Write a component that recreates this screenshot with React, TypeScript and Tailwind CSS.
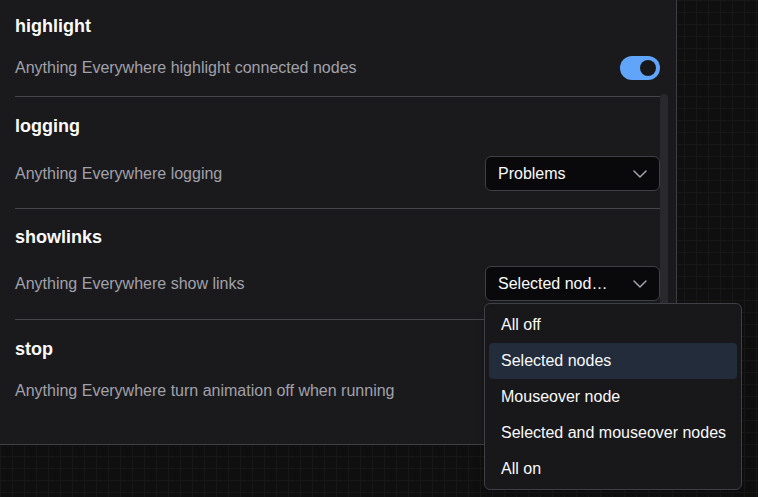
import { useState } from 'react'

type Setting = {
  name: string
  desc: string
  control: 'toggle' | 'select'
  value?: string
  pad: string
}

const SETTINGS: Setting[] = [
  {
    name: 'highlight',
    desc: 'Anything Everywhere highlight connected nodes',
    control: 'toggle',
    pad: 'gap-[14px] pt-3 pb-[14px] border-b',
  },
  {
    name: 'logging',
    desc: 'Anything Everywhere logging',
    control: 'select',
    value: 'Problems',
    pad: 'gap-4 pt-[15px] pb-[17px] border-b',
  },
  {
    name: 'showlinks',
    desc: 'Anything Everywhere show links',
    control: 'select',
    value: 'Selected nodes',
    pad: 'gap-[15px] pt-[14px] pb-[18px] border-b',
  },
  {
    name: 'stop',
    desc: 'Anything Everywhere turn animation off when running',
    control: 'toggle',
    pad: 'gap-[14px] pt-[15px] pb-4',
  },
]

const OPTIONS = ['All off', 'Selected nodes', 'Mouseover node', 'Selected and mouseover nodes', 'All on']

function Chevron() {
  return (
    <svg width="14" height="8" viewBox="0 0 14 8" fill="none" className="shrink-0" aria-hidden>
      <path d="M1 1l6 6 6-6" stroke="#a1a1aa" strokeWidth="1.5" strokeLinecap="round" strokeLinejoin="round" />
    </svg>
  )
}

function Toggle({ on }: { on: boolean }) {
  return (
    <div className={`flex h-6 w-10 items-center rounded-full px-1 ${on ? 'justify-end bg-[#60a5fa]' : 'justify-start bg-[#3f3f46]'}`}>
      <div className="size-4 rounded-full bg-[#18181b]" />
    </div>
  )
}

function SelectTrigger({ value }: { value: string }) {
  return (
    <div className="flex h-[35px] w-[175px] items-center justify-between rounded-md border border-[#3f3f46] bg-[#09090b] px-3">
      <span className="max-w-[110px] truncate whitespace-nowrap text-base text-[#fafafa]">{value}</span>
      <Chevron />
    </div>
  )
}

function SettingRow({ s }: { s: Setting }) {
  return (
    <div className={`flex flex-col border-[#45454b] ${s.pad}`}>
      <h3 className="text-lg font-bold leading-7 text-[#fafafa]">{s.name}</h3>
      <div className={`flex items-center justify-between ${s.control === 'toggle' ? 'h-7' : 'h-[35px]'}`}>
        <span className="text-base text-[#a1a1aa]">{s.desc}</span>
        {s.control === 'toggle' ? <Toggle on /> : <SelectTrigger value={s.value ?? ''} />}
      </div>
    </div>
  )
}

export default function App() {
  const [active] = useState(1)

  return (
    <div
      className="relative h-[497px] w-[758px] overflow-hidden bg-[#0f0f0f] bg-[linear-gradient(to_right,#171717_1px,transparent_1px),linear-gradient(to_bottom,#171717_1px,transparent_1px)] bg-size-[12px_12px]"
      style={{ fontFamily: '"Liberation Sans", Arial, sans-serif' }}
    >
      <div className="relative h-[445px] w-[677px] overflow-hidden border-r border-b border-[#3f3f44] bg-[#1a1a1d]">
        <div className="flex flex-col pl-[15px] pr-4">
          {SETTINGS.map((s) => (
            <SettingRow key={s.name} s={s} />
          ))}
        </div>
        <div className="absolute left-[660px] top-[94px] h-[330px] w-2 rounded-full bg-[#29292d]" />
      </div>

      <div className="absolute left-[484px] top-[303px] w-[258px] rounded-md border border-[#3f3f46] bg-[#18181b] px-1 pt-[3px] pb-[2px] shadow-lg">
        {OPTIONS.map((o, i) => (
          <div
            key={o}
            className={`flex h-9 items-center whitespace-nowrap rounded-sm px-3 text-base text-[#fafafa] ${i === active ? 'bg-[#222c3b]' : ''}`}
          >
            {o}
          </div>
        ))}
      </div>
    </div>
  )
}
